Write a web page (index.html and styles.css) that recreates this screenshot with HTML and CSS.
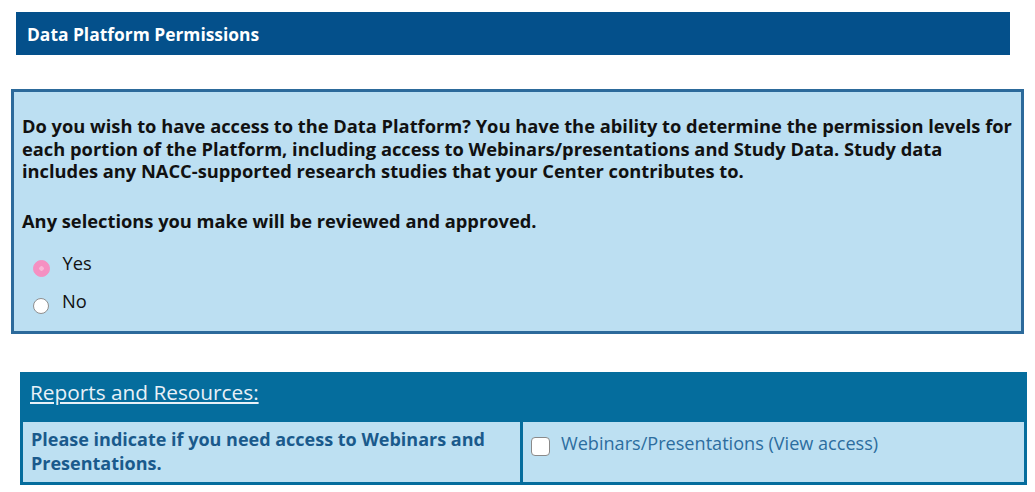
FILE: index.html
```html
<!DOCTYPE html>
<html lang="en">
<head>
    <meta charset="UTF-8">
    <title>Data Platform Permissions</title>
    <link rel="stylesheet" href="styles.css">
</head>
<body>

<div class="tittel">Data Platform Permissions</div>

<div class="sporsmal">
    <p>Do you wish to have access to the Data Platform? You have the ability to determine the permission levels for
        each portion of the Platform, including access to Webinars/presentations and Study Data. Study data
        includes any NACC-supported research studies that your Center contributes to.</p>
    <p>Any selections you make will be reviewed and approved.</p>
    <div class="valg">
        <span class="radio valgt"></span>
        <span>Yes</span>
    </div>
    <div class="valg">
        <span class="radio"></span>
        <span>No</span>
    </div>
</div>

<div class="ressurser">
    <div class="hode"><a href="#">Reports and Resources:</a></div>
    <div class="celle venstre">Please indicate if you need access to Webinars and Presentations.</div>
    <div class="celle hoyre">
        <span class="boks"></span>
        <span>Webinars/Presentations (View access)</span>
    </div>
</div>

</body>
</html>
```

FILE: styles.css
```css
body{
    margin: 0;
    padding: 12px 0 0 0;
    font-family: "Open Sans", "Noto Sans", sans-serif;
    background-color: #ffffff;
}

.tittel{
    margin-left: 16px;
    width: 994px;
    height: 43px;
    box-sizing: border-box;
    padding: 0 11px;
    display: flex;
    align-items: center;
    background-color: #04508b;
    color: #ffffff;
    font-weight: bold;
    font-size: 17.4px;
}

.sporsmal{
    margin: 34px 0 0 11px;
    width: 1013px;
    height: 245px;
    box-sizing: border-box;
    border: 3px solid #2c6a9b;
    background-color: #bcdff2;
    padding: 23px 8px 0 8px;
    color: #111111;
    font-size: 18.3px;
    font-weight: bold;
    line-height: 22.5px;
}

.sporsmal p{
    margin: 0 0 27px 0;
}

.valg{
    display: flex;
    align-items: center;
    gap: 13px;
    font-weight: normal;
    height: 38px;
    margin-top: -15px;
    margin-bottom: 15px;
    padding-left: 11px;
}

.radio{
    width: 16px;
    height: 16px;
    border-radius: 50%;
    background-color: #ffffff;
    border: 1px solid #8f8f8f;
    box-sizing: border-box;
    margin-top: 10px;
}

.valgt{
    width: 17px;
    height: 17px;
    margin-left: -0.5px;
    background-color: #f590c2;
    border-color: #f590c2;
    background-image: radial-gradient(circle, #f9b6d6 0 2px, transparent 2.5px);
}

.ressurser{
    margin: 38px 0 0 20px;
    width: 1007px;
    box-sizing: border-box;
    display: grid;
    grid-template-columns: 497px 1fr;
    gap: 3px;
    padding: 0 3px 3px 3px;
    background-color: #056d9d;
}

.hode{
    grid-column: 1 / 3;
    height: 47px;
    display: flex;
    align-items: center;
    padding-left: 7px;
    padding-bottom: 7px;
    box-sizing: border-box;
}

.hode a{
    color: #e8f1f8;
    font-size: 20.8px;
    text-decoration: underline;
}

.celle{
    background-color: #bde0f2;
    padding: 5px 8px 5px 8px;
    min-height: 46px;
}

.venstre{
    color: #1a5a8c;
    font-weight: bold;
    font-size: 18px;
    line-height: 24px;
}

.hoyre{
    display: flex;
    align-items: flex-start;
    gap: 11px;
    color: #2c6d9f;
    font-size: 18.1px;
    padding-top: 9px;
}

.boks{
    width: 19px;
    height: 19px;
    border: 1.5px solid #8a8a8a;
    border-radius: 4px;
    background-color: #ffffff;
    box-sizing: border-box;
    margin-top: 6px;
}
```
